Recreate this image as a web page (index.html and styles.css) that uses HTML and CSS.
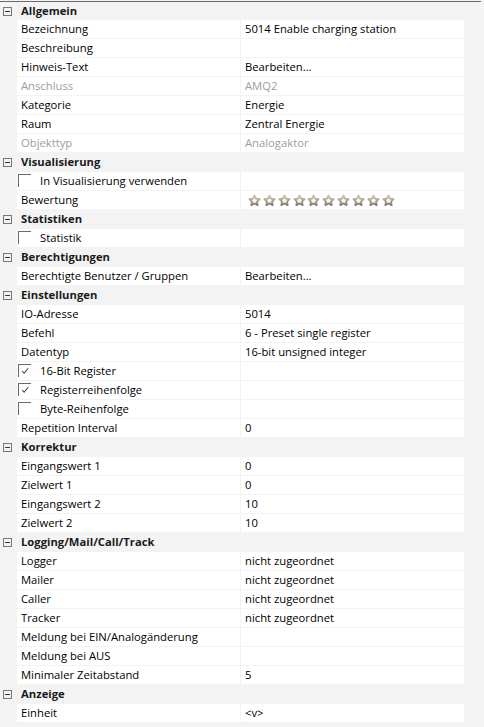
FILE: index.html
```html
<!DOCTYPE html>
<html lang="de">
<head>
<meta charset="utf-8">
<title>Eigenschaften</title>
<link rel="stylesheet" href="styles.css">
</head>
<body>
<svg class="defs" width="0" height="0" aria-hidden="true">
  <defs>
    <linearGradient id="starg" x1="0" y1="0" x2="0" y2="1">
      <stop offset="0" stop-color="#cfc8b8"/>
      <stop offset="1" stop-color="#857b69"/>
    </linearGradient>
    <symbol id="star" viewBox="0 0 24 24">
      <path d="M12 2.6l2.9 5.9 6.5.9-4.7 4.6 1.1 6.5L12 17.4l-5.8 3.1 1.1-6.5-4.7-4.6 6.5-.9z" fill="#f6f4ef" stroke="url(#starg)" stroke-width="3.4" stroke-linejoin="round"/>
    </symbol>
  </defs>
</svg>
<div class="grid">
  <div class="row head first"><div class="gut"><span class="minus"></span></div><div class="htext">Allgemein</div></div>
  <div class="row"><div class="gut"></div><div class="lbl">Bezeichnung</div><div class="val">5014 Enable charging station</div></div>
  <div class="row"><div class="gut"></div><div class="lbl">Beschreibung</div><div class="val"></div></div>
  <div class="row"><div class="gut"></div><div class="lbl">Hinweis-Text</div><div class="val">Bearbeiten...</div></div>
  <div class="row dis"><div class="gut"></div><div class="lbl">Anschluss</div><div class="val">AMQ2</div></div>
  <div class="row"><div class="gut"></div><div class="lbl">Kategorie</div><div class="val">Energie</div></div>
  <div class="row"><div class="gut"></div><div class="lbl">Raum</div><div class="val">Zentral Energie</div></div>
  <div class="row dis"><div class="gut"></div><div class="lbl">Objekttyp</div><div class="val">Analogaktor</div></div>

  <div class="row head"><div class="gut"><span class="minus"></span></div><div class="htext">Visualisierung</div></div>
  <div class="row"><div class="gut"></div><div class="lbl cb"><span class="box"></span>In Visualisierung verwenden</div><div class="val"></div></div>
  <div class="row"><div class="gut"></div><div class="lbl">Bewertung</div><div class="val stars">
    <svg class="st"><use href="#star"/></svg><svg class="st"><use href="#star"/></svg><svg class="st"><use href="#star"/></svg><svg class="st"><use href="#star"/></svg><svg class="st"><use href="#star"/></svg><svg class="st"><use href="#star"/></svg><svg class="st"><use href="#star"/></svg><svg class="st"><use href="#star"/></svg><svg class="st"><use href="#star"/></svg><svg class="st"><use href="#star"/></svg>
  </div></div>

  <div class="row head"><div class="gut"><span class="minus"></span></div><div class="htext">Statistiken</div></div>
  <div class="row"><div class="gut"></div><div class="lbl cb"><span class="box"></span>Statistik</div><div class="val"></div></div>

  <div class="row head"><div class="gut"><span class="minus"></span></div><div class="htext">Berechtigungen</div></div>
  <div class="row"><div class="gut"></div><div class="lbl">Berechtigte Benutzer / Gruppen</div><div class="val">Bearbeiten...</div></div>

  <div class="row head"><div class="gut"><span class="minus"></span></div><div class="htext">Einstellungen</div></div>
  <div class="row"><div class="gut"></div><div class="lbl">IO-Adresse</div><div class="val">5014</div></div>
  <div class="row"><div class="gut"></div><div class="lbl">Befehl</div><div class="val">6 - Preset single register</div></div>
  <div class="row"><div class="gut"></div><div class="lbl">Datentyp</div><div class="val">16-bit unsigned integer</div></div>
  <div class="row"><div class="gut"></div><div class="lbl cb"><span class="box"><svg class="chk" viewBox="0 0 13 13"><polyline points="3.5,6.5 5.5,9 10,3.5"/></svg></span>16-Bit Register</div><div class="val"></div></div>
  <div class="row"><div class="gut"></div><div class="lbl cb"><span class="box"><svg class="chk" viewBox="0 0 13 13"><polyline points="3.5,6.5 5.5,9 10,3.5"/></svg></span>Registerreihenfolge</div><div class="val"></div></div>
  <div class="row"><div class="gut"></div><div class="lbl cb"><span class="box"></span>Byte-Reihenfolge</div><div class="val"></div></div>
  <div class="row"><div class="gut"></div><div class="lbl">Repetition Interval</div><div class="val">0</div></div>

  <div class="row head"><div class="gut"><span class="minus"></span></div><div class="htext">Korrektur</div></div>
  <div class="row"><div class="gut"></div><div class="lbl">Eingangswert 1</div><div class="val">0</div></div>
  <div class="row"><div class="gut"></div><div class="lbl">Zielwert 1</div><div class="val">0</div></div>
  <div class="row"><div class="gut"></div><div class="lbl">Eingangswert 2</div><div class="val">10</div></div>
  <div class="row"><div class="gut"></div><div class="lbl">Zielwert 2</div><div class="val">10</div></div>

  <div class="row head"><div class="gut"><span class="minus"></span></div><div class="htext">Logging/Mail/Call/Track</div></div>
  <div class="row"><div class="gut"></div><div class="lbl">Logger</div><div class="val">nicht zugeordnet</div></div>
  <div class="row"><div class="gut"></div><div class="lbl">Mailer</div><div class="val">nicht zugeordnet</div></div>
  <div class="row"><div class="gut"></div><div class="lbl">Caller</div><div class="val">nicht zugeordnet</div></div>
  <div class="row"><div class="gut"></div><div class="lbl">Tracker</div><div class="val">nicht zugeordnet</div></div>
  <div class="row"><div class="gut"></div><div class="lbl">Meldung bei EIN/Analogänderung</div><div class="val"></div></div>
  <div class="row"><div class="gut"></div><div class="lbl">Meldung bei AUS</div><div class="val"></div></div>
  <div class="row"><div class="gut"></div><div class="lbl">Minimaler Zeitabstand</div><div class="val">5</div></div>

  <div class="row head"><div class="gut"><span class="minus"></span></div><div class="htext">Anzeige</div></div>
  <div class="row"><div class="gut"></div><div class="lbl">Einheit</div><div class="val">&lt;v&gt;</div></div>
</div>
</body>
</html>
```

FILE: styles.css
```css
html, body {
  margin: 0;
  padding: 0;
  background: #f3f3f3;
}
body {
  font-family: "Open Sans", "Noto Sans", sans-serif;
  font-size: 11.25px;
  color: #000;
  overflow: hidden;
}
.defs {
  position: absolute;
  width: 0;
  height: 0;
}
.grid {
  margin-top: 1px;
  width: 481px;
  border-top: 1px solid #6b6b6b;
}
.row {
  display: grid;
  grid-template-columns: 16px 223px 223px;
  column-gap: 1px;
  width: 463px;
  height: 18px;
  padding-bottom: 1px;
  line-height: 18px;
}
.row.first {
  height: 17px;
}
.lbl, .val {
  background: #fff;
  white-space: nowrap;
  overflow: hidden;
}
.lbl {
  padding-left: 4px;
}
.val {
  padding-left: 4px;
}
.dis .lbl, .dis .val {
  color: #9d9d9d;
}
.head .htext {
  grid-column: 2 / 4;
  padding-left: 4px;
  font-weight: 700;
  color: #1a1a1a;
}
.gut {
  display: flex;
  justify-content: flex-start;
  align-items: center;
}
.minus {
  display: block;
  width: 7px;
  height: 7px;
  margin-left: 3px;
  border: 1px solid #777;
  position: relative;
}
.minus::after {
  content: "";
  position: absolute;
  left: 1px;
  right: 1px;
  top: 3px;
  height: 1px;
  background: #333;
}
.row.first .minus {
  margin-top: 1px;
}
.lbl.cb {
  display: flex;
  align-items: flex-start;
  padding-left: 1px;
}
.box {
  display: block;
  width: 13px;
  height: 13px;
  margin-top: 2px;
  margin-right: 9px;
  box-sizing: border-box;
  border-top: 1px solid #6a6a6a;
  border-left: 1px solid #6a6a6a;
  flex: none;
}
.chk {
  display: block;
  width: 12px;
  height: 12px;
  margin: 0;
}
.chk polyline {
  fill: none;
  stroke: #3a3a3a;
  stroke-width: 1.1;
}
.stars {
  display: flex;
  align-items: center;
  padding-left: 7px;
}
.st {
  width: 13px;
  height: 13px;
  margin-right: 1.85px;
  flex: none;
}
```
